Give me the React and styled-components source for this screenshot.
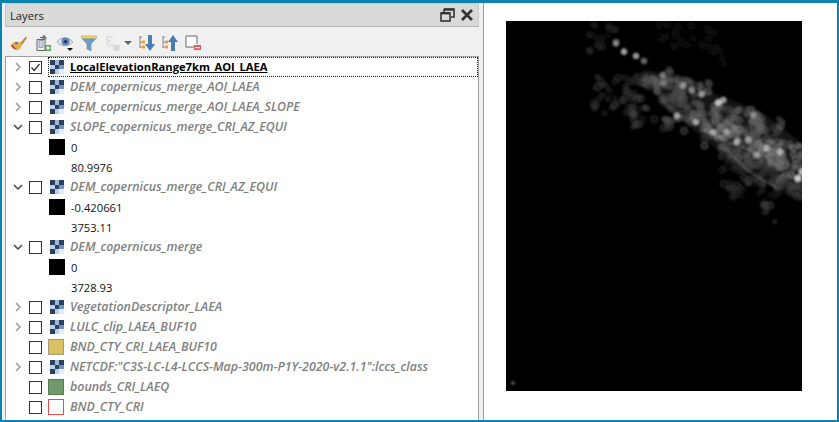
import React from 'react';
import styled, { createGlobalStyle } from 'styled-components';

const Global = createGlobalStyle`
  html, body { margin: 0; padding: 0; background: #fff; }
  #root { width: 839px; height: 422px; overflow: hidden; }
`;
const FONT = `"Open Sans", "Noto Sans", "Liberation Sans", sans-serif`;

const Frame = styled.div`
  box-sizing: border-box; width: 839px; height: 422px;
  border: 2px solid #0a84ae; border-top-width: 3px;
  display: flex; background: #fff; overflow: hidden; font-family: ${FONT};
`;
const Dock = styled.section`
  width: 477px; flex: none; display: flex; flex-direction: column;
  background: #f0f0f0; padding-left: 3px; box-sizing: border-box;
`;
const TitleBar = styled.header`
  height: 24px; flex: none; background: #d9d9d9; border: 1px solid #c8c8c8; border-bottom: 1px solid #b4b4b4;
  box-sizing: border-box; display: flex; align-items: center; padding: 0 4px 0 4px;
  font-size: 11.2px; color: #1c1c1c;
`;
const Title = styled.span` flex: 1; `;
const Toolbar = styled.div`
  height: 29px; flex: none; display: flex; align-items: center; padding: 2px 0 0 6px; box-sizing: border-box;
`;
const ToolIcon = styled.svg` width: ${p => p.$w ?? 16}px; height: 16px; margin-right: ${p => p.$gap ?? 7}px; flex: none; `;
const Tree = styled.div`
  flex: 1; min-height: 0; background: #fff; border: 1px solid #a0a0a0; border-bottom: 0; overflow: hidden;
`;
const Row = styled.div`
  height: 20px; display: flex; align-items: center; box-sizing: border-box;
`;
const Arrow = styled.span` width: 23px; flex: none; display: flex; justify-content: center; box-sizing: border-box; `;
const Check = styled.span`
  flex: none; box-sizing: content-box; border: 1px solid #333; background: #fff; margin: 0 6px 0 0;
  width: 11px; height: 11px; display: flex; align-items: center; justify-content: center;
`;
const ItemBody = styled.div`
  flex: 1; height: 20px; display: flex; align-items: center; box-sizing: border-box;
  ${p => p.$current ? `outline: 1px dotted #222; outline-offset: -1px;` : ''}
`;
const IconSlot = styled.span` width: 22px; height: 16px; flex: none; display: flex; align-items: center; padding-left: ${p => p.$pad ?? 0}px; box-sizing: border-box; `;
const LegendIndent = styled.span` width: 43px; flex: none; `;
const Swatch = styled.span`
  width: 16px; height: 16px; flex: none; box-sizing: border-box; display: block;
  background: ${p => p.$fill}; border: 1px solid ${p => p.$line};
`;
const LayerName = styled.span`
  font-size: ${p => p.$on ? '11.2px' : '12.4px'}; line-height: 20px; white-space: nowrap;
  font-weight: ${p => p.$on ? 700 : 600}; font-style: ${p => p.$on ? 'normal' : 'italic'};
  color: ${p => p.$on ? '#000' : '#808080'};
  ${p => p.$on ? 'text-decoration: underline;' : ''}
`;
const Value = styled.span` font-size: 11.2px; color: #111; `;
const Splitter = styled.div` width: 5px; flex: none; background: #f0f0f0; border-right: 1px solid #a0a0a0; box-sizing: border-box; `;
const Canvas = styled.main` flex: 1; background: #fff; padding: 18px 0 0 22px; `;
const MapImage = styled.svg` display: block; width: 296px; height: 370px; background: #000; `;

const Chevron = ({ open }) => (
  <svg width="10" height="10" viewBox="0 0 10 10">
    <path d={open ? 'M1 3 L5 7 L9 3' : 'M3 1 L7 5 L3 9'} fill="none" stroke={open ? '#444' : '#9a9a9a'} strokeWidth="1.5" />
  </svg>
);
const RasterIcon = () => (
  <svg width="14" height="14" viewBox="0 0 14 14" shapeRendering="crispEdges">
    <rect width="14" height="14" fill="#b9cfe6" />
    <rect x="0" y="0" width="5" height="5" fill="#2c3f5c" /><rect x="9" y="0" width="5" height="5" fill="#2c3f5c" />
    <rect x="5" y="5" width="4" height="4" fill="#2c3f5c" />
    <rect x="0" y="9" width="5" height="5" fill="#2c3f5c" /><rect x="9" y="9" width="5" height="5" fill="#e3edf7" />
    <rect x="5" y="0" width="4" height="5" fill="#9dbbdb" /><rect x="9" y="5" width="5" height="4" fill="#6d93c0" />
  </svg>
);

const Layer = ({ name, kind = 'raster', arrow, checked, current, swatch }) => (
  <Row>
    <Arrow>{arrow && <Chevron open={arrow === 'open'} />}</Arrow>
    <Check>{checked && <svg width="11" height="11" viewBox="0 0 11 11"><path d="M1.5 5.5 L4.2 8.5 L9.5 2" fill="none" stroke="#333" strokeWidth="1.3" /></svg>}</Check>
    <ItemBody $current={current}>
      <IconSlot $pad={kind === 'raster' ? 2 : 0}>{kind === 'raster' ? <RasterIcon /> : <Swatch $fill={swatch[0]} $line={swatch[1]} />}</IconSlot>
      <LayerName $on={current}>{name}</LayerName>
    </ItemBody>
  </Row>
);
const Legend = ({ value, swatch }) => (
  <Row>
    <LegendIndent />
    <IconSlot>{swatch && <Swatch $fill="#000" $line="#000" />}</IconSlot>
    <Value>{value}</Value>
  </Row>
);

const blobs = (() => {
  let s = 12345;
  const r = () => (s = (s * 16807) % 2147483647) / 2147483647;
  const out = [];
  const z = (x, y) => [(x - 18) / 3, (y - 18) / 3];
  const cloud = (cx, cy, sx, sy, n, lum, rad = 2.9) => {
    for (let i = 0; i < n; i++) {
      const [x, y] = z(cx + (r() - .5) * sx, cy + (r() - .5) * sy);
      out.push([x, y, rad * (.75 + r() * .5), lum * (.55 + r() * .8), .3]);
    }
  };
  cloud(560, 70, 170, 90, 40, 20);
  cloud(640, 120, 70, 70, 10, 18);
  cloud(310, 70, 90, 80, 18, 44);
  cloud(350, 240, 150, 120, 44, 56);
  cloud(430, 300, 70, 60, 12, 62);
  cloud(410, 330, 20, 20, 2, 60);
  cloud(470, 190, 90, 60, 24, 80);
  cloud(570, 225, 120, 60, 24, 92);
  const band = [[500,230,70],[545,275,48],[600,310,78],[670,310,72],[740,320,85],[800,350,72],[660,360,92],[730,390,92],[800,420,105],[860,420,98],[880,480,85],[780,470,58],[710,430,48],[860,510,38]];
  band.forEach(([x, y, l]) => cloud(x, y, 100, 80, 30, l));
  cloud(515, 320, 50, 40, 10, 85);
  cloud(700, 525, 65, 55, 12, 52);
  cloud(770, 520, 40, 30, 5, 34);
  cloud(800, 575, 40, 30, 6, 62);
  cloud(825, 615, 6, 20, 2, 50, 1.5);
  [[348,85,170],[372,110,200],[408,123,190],[432,138,130],[488,180,140],[490,205,120],[550,212,170],[575,225,150],[605,238,180],[655,262,235],[670,255,190],[530,302,180],[588,322,190],[640,352,190],[680,350,170],[710,380,190],[745,375,170],[760,300,150],[800,400,190],[840,410,190],[770,420,160],[893,490,250],[905,470,210]].forEach(([x, y, l]) => {
    const [a, b] = z(x, y); out.push([a, b, 2.8, l, .75]);
  });
  return out;
})();

const MapRaster = () => (
  <MapImage viewBox="0 0 296 370">
    <defs>
      <filter id="soft" x="-5%" y="-5%" width="110%" height="110%"><feGaussianBlur stdDeviation="0.8" /></filter>
      <filter id="wide" x="-5%" y="-5%" width="110%" height="110%"><feGaussianBlur stdDeviation="4" /></filter>
      <clipPath id="clip"><rect width="296" height="370" /></clipPath>
    </defs>
    <g clipPath="url(#clip)">
      <g transform="translate(-6 -6) scale(.3333)">
        <path filter="url(#wide)" fill="#181818" d="M430 180 L520 190 L650 240 L780 290 L905 385 L925 560 L850 530 L700 440 L600 360 L500 280z" />
      </g>
      <g filter="url(#soft)" style={{ mixBlendMode: 'screen' }}>
        {blobs.map(([x, y, rad, l, o], i) => {
          const v = Math.min(255, Math.round(l));
          return <circle key={i} cx={x} cy={y} r={rad} fill={`rgb(${v},${v},${v})`} fillOpacity={o} stroke={`rgb(${v},${v},${v})`} strokeWidth=".8" />;
        })}
        <g transform="translate(-6 -6) scale(.3333)" fill="none" stroke="#c0c0c0" strokeWidth="3" strokeOpacity=".45">
          <path d="M610 345 L700 385 L790 425 L850 465" />
          <path d="M670 395 L740 465 L830 520" />
        </g>
        <circle cx="7" cy="362" r="2" fill="#555" />
      </g>
    </g>
  </MapImage>
);

export default function App() {
  return (
    <Frame>
      <Global />
      <Dock>
        <TitleBar>
          <Title>Layers</Title>
          <svg width="15" height="14" viewBox="0 0 15 14" style={{ marginRight: 5 }}>
            <path d="M4 1h10v8h-3M4 1v3" fill="none" stroke="#333" strokeWidth="1.6" /><rect x="1" y="5" width="9" height="8" fill="none" stroke="#333" strokeWidth="1.6" /><rect x="1" y="4" width="9" height="2.4" fill="#333" /><rect x="4" y="0.5" width="10" height="2.2" fill="#333" />
          </svg>
          <svg width="14" height="14" viewBox="0 0 14 14">
            <path d="M2 2 L12 12 M12 2 L2 12" stroke="#333" strokeWidth="2.8" />
          </svg>
        </TitleBar>
        <Toolbar>
          <ToolIcon viewBox="0 0 16 16" $gap={8}>
            <path d="M9 8 L15 1.5 L16 3 L11 10z" fill="#b88a4a" /><path d="M1 9 C3 6 6 6 8 7 L11 10 C10 13 8 15 6 15z" fill="#e0b040" /><path d="M1 9 L6 15 L3 14 L0 11z" fill="#c03030" /><path d="M4 7.5 L7 7 L5 10z" fill="#3a60c8" />
          </ToolIcon>
          <ToolIcon viewBox="0 0 16 16" $gap={6}>
            <path d="M2 4.5h8v11H2z M5 2.5h6v2 M8 .8h2v3h-2z" fill="#eee" stroke="#666" /><rect x="4" y="5.5" width="4" height="7" fill="#c9d5e2" stroke="#7a8b9b" strokeWidth=".7" /><rect x="10" y="10" width="6" height="6" fill="#5aa56a" /><path d="M13 11v4M11 13h4" stroke="#fff" strokeWidth="1.2" />
          </ToolIcon>
          <ToolIcon viewBox="0 0 16 16" $gap={8}>
            <path d="M0 7 C3 2 11 1 16 7 C11 12 4 12 0 7z" fill="#dfe2e6" stroke="#9a9fa5" strokeWidth=".8" /><circle cx="8.5" cy="6.5" r="4" fill="#5d86b4" /><circle cx="8.5" cy="6.5" r="1.6" fill="#1e2e44" /><path d="M10 13h6l-3 3z" fill="#111" />
          </ToolIcon>
          <ToolIcon viewBox="0 0 16 16" $gap={8}>
            <path d="M.5 1h15v2L10 9v7l-4-2V9L.5 3z" fill="#6f9bc1" stroke="#5b87ac" strokeWidth=".5" /><rect x=".5" y="1" width="15" height="2.4" fill="#e9cf5b" />
          </ToolIcon>
          <ToolIcon viewBox="0 0 16 16" $gap={3}>
            <path d="M8 3 C4 0 1 2 2 4 C3 6 5 6 6 6 C3 6 1 8 3 10 C5 11.5 7 10 8 9" fill="none" stroke="#d8d8d8" strokeWidth="1.4" /><path d="M8 10h7v1l-1 5H9l-1-5z" fill="#d8d8d8" />
          </ToolIcon>
          <ToolIcon viewBox="0 0 8 16" $w={8} $gap={7}><path d="M0 6h8l-4 4z" fill="#666" /></ToolIcon>
          <ToolIcon viewBox="0 0 16 16" $gap={7}>
            <path d="M1 1v12M1 2h2M1 7h2M1 12h2" stroke="#888" strokeWidth="1" fill="none" /><rect x="3" y="5.5" width="3" height="3" fill="#f0a030" /><rect x="3" y="10.5" width="3" height="3" fill="#f0a030" /><path d="M9 0h4v9h3l-5 7-5-7h3z" fill="#4b7cb4" />
          </ToolIcon>
          <ToolIcon viewBox="0 0 16 16" $gap={7}>
            <path d="M1 1v12M1 2h2M1 7h2M1 12h2" stroke="#888" strokeWidth="1" fill="none" /><rect x="3" y="5.5" width="3" height="3" fill="#f0a030" /><rect x="3" y="10.5" width="3" height="3" fill="#f0a030" /><path d="M9 16h4V7h3l-5-7-5 7h3z" fill="#4b7cb4" />
          </ToolIcon>
          <ToolIcon viewBox="0 0 16 16" $gap={0}>
            <path d="M10 12H1V1h11v8" fill="#fff" stroke="#666" strokeWidth="1" /><rect x="9" y="10" width="7" height="5" fill="#e85a5a" /><rect x="10" y="12" width="5" height="1.2" fill="#fff" />
          </ToolIcon>
        </Toolbar>
        <Tree>
          <Layer name="LocalElevationRange7km_AOI_LAEA" arrow="closed" checked current />
          <Layer name="DEM_copernicus_merge_AOI_LAEA" arrow="closed" />
          <Layer name="DEM_copernicus_merge_AOI_LAEA_SLOPE" arrow="closed" />
          <Layer name="SLOPE_copernicus_merge_CRI_AZ_EQUI" arrow="open" />
          <Legend value="0" swatch />
          <Legend value="80.9976" />
          <Layer name="DEM_copernicus_merge_CRI_AZ_EQUI" arrow="open" />
          <Legend value="-0.420661" swatch />
          <Legend value="3753.11" />
          <Layer name="DEM_copernicus_merge" arrow="open" />
          <Legend value="0" swatch />
          <Legend value="3728.93" />
          <Layer name="VegetationDescriptor_LAEA" arrow="closed" />
          <Layer name="LULC_clip_LAEA_BUF10" arrow="closed" />
          <Layer name="BND_CTY_CRI_LAEA_BUF10" kind="poly" swatch={['#dcc064', '#a89a6a']} />
          <Layer name={'NETCDF:"C3S-LC-L4-LCCS-Map-300m-P1Y-2020-v2.1.1":lccs_class'} arrow="closed" />
          <Layer name="bounds_CRI_LAEQ" kind="poly" swatch={['#71996c', '#5a7a58']} />
          <Layer name="BND_CTY_CRI" kind="poly" swatch={['#fff', '#e84c4c']} />
        </Tree>
      </Dock>
      <Splitter />
      <Canvas><MapRaster /></Canvas>
    </Frame>
  );
}
